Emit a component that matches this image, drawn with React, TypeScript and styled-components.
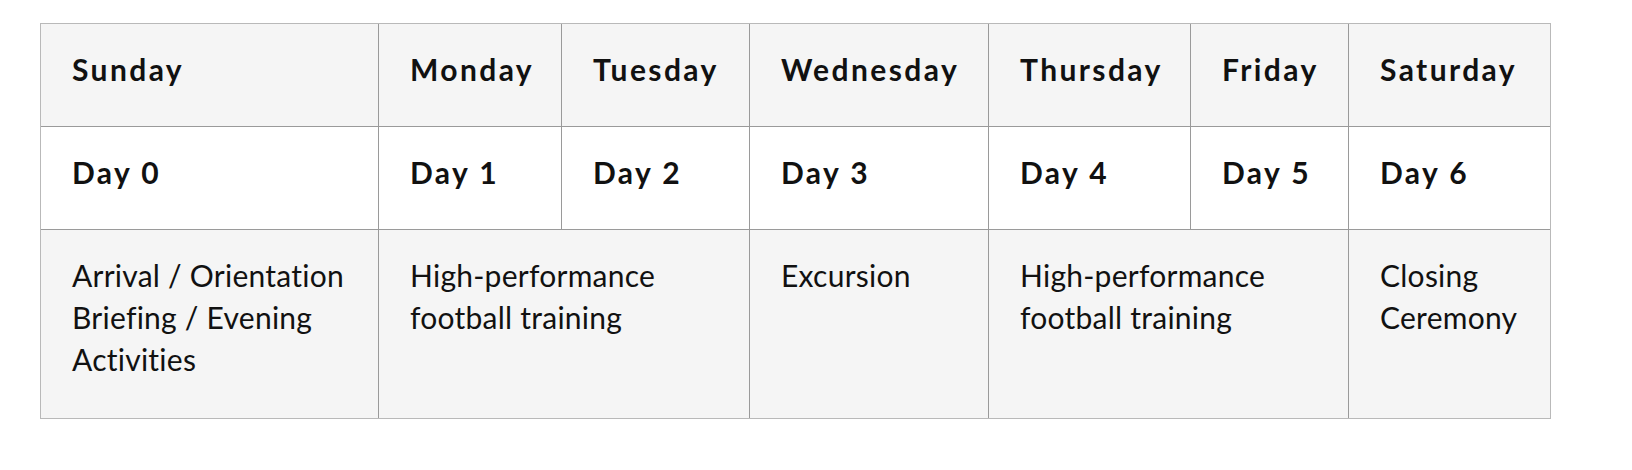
import React from "react";
import styled, { createGlobalStyle } from "styled-components";

const GlobalStyle = createGlobalStyle`
  html, body {
    margin: 0;
    padding: 0;
    background: #ffffff;
  }
  body {
    font-family: Lato, "Noto Sans", Arial, sans-serif;
    color: #111111;
  }
`;

const Page = styled.div`
  padding: 23px 0 0 40px;
`;

const Table = styled.table`
  table-layout: fixed;
  width: 1511px;
  border-collapse: separate;
  border-spacing: 0;
  border: 1px solid #b9b9b9;
`;

const Row = styled.tr<{ $shade?: boolean }>`
  background: ${(p) => (p.$shade ? "#f5f5f5" : "#ffffff")};
`;

const Cell = styled.td<{ $bold?: boolean; $first?: boolean; $topLine?: boolean; $bottomPad?: number }>`
  vertical-align: top;
  padding: 24px 31px ${(p) => p.$bottomPad ?? 36}px 31px;
  font-size: 30px;
  line-height: 42px;
  font-weight: ${(p) => (p.$bold ? 700 : 400)};
  letter-spacing: ${(p) => (p.$bold ? "2.4px" : "0.25px")};
  color: #111111;
  border-left: ${(p) => (p.$first ? "none" : "1px solid #9a9a9a")};
  border-top: ${(p) => (p.$topLine ? "1px solid #9a9a9a" : "none")};
  white-space: nowrap;
`;

const widths = [337, 183, 188, 239, 202, 158, 202];
const days = ["Sunday", "Monday", "Tuesday", "Wednesday", "Thursday", "Friday", "Saturday"];

const activities: { text: React.ReactNode; span: number }[] = [
  { text: <>Arrival / Orientation<br />Briefing / Evening<br />Activities</>, span: 1 },
  { text: <>High-performance<br />football training</>, span: 2 },
  { text: "Excursion", span: 1 },
  { text: <>High-performance<br />football training</>, span: 2 },
  { text: <>Closing<br />Ceremony</>, span: 1 },
];

export default function App() {
  return (
    <>
      <GlobalStyle />
      <Page>
        <Table>
          <colgroup>
            {widths.map((w, i) => (
              <col key={i} style={{ width: w }} />
            ))}
          </colgroup>
          <tbody>
            <Row $shade>
              {days.map((d, i) => (
                <Cell key={d} $bold $first={i === 0}>
                  {d}
                </Cell>
              ))}
            </Row>
            <Row>
              {days.map((_, i) => (
                <Cell key={i} $bold $first={i === 0} $topLine>
                  Day {i}
                </Cell>
              ))}
            </Row>
            <Row $shade>
              {activities.map((a, i) => (
                <Cell key={i} colSpan={a.span} $first={i === 0} $topLine $bottomPad={38}>
                  {a.text}
                </Cell>
              ))}
            </Row>
          </tbody>
        </Table>
      </Page>
    </>
  );
}
